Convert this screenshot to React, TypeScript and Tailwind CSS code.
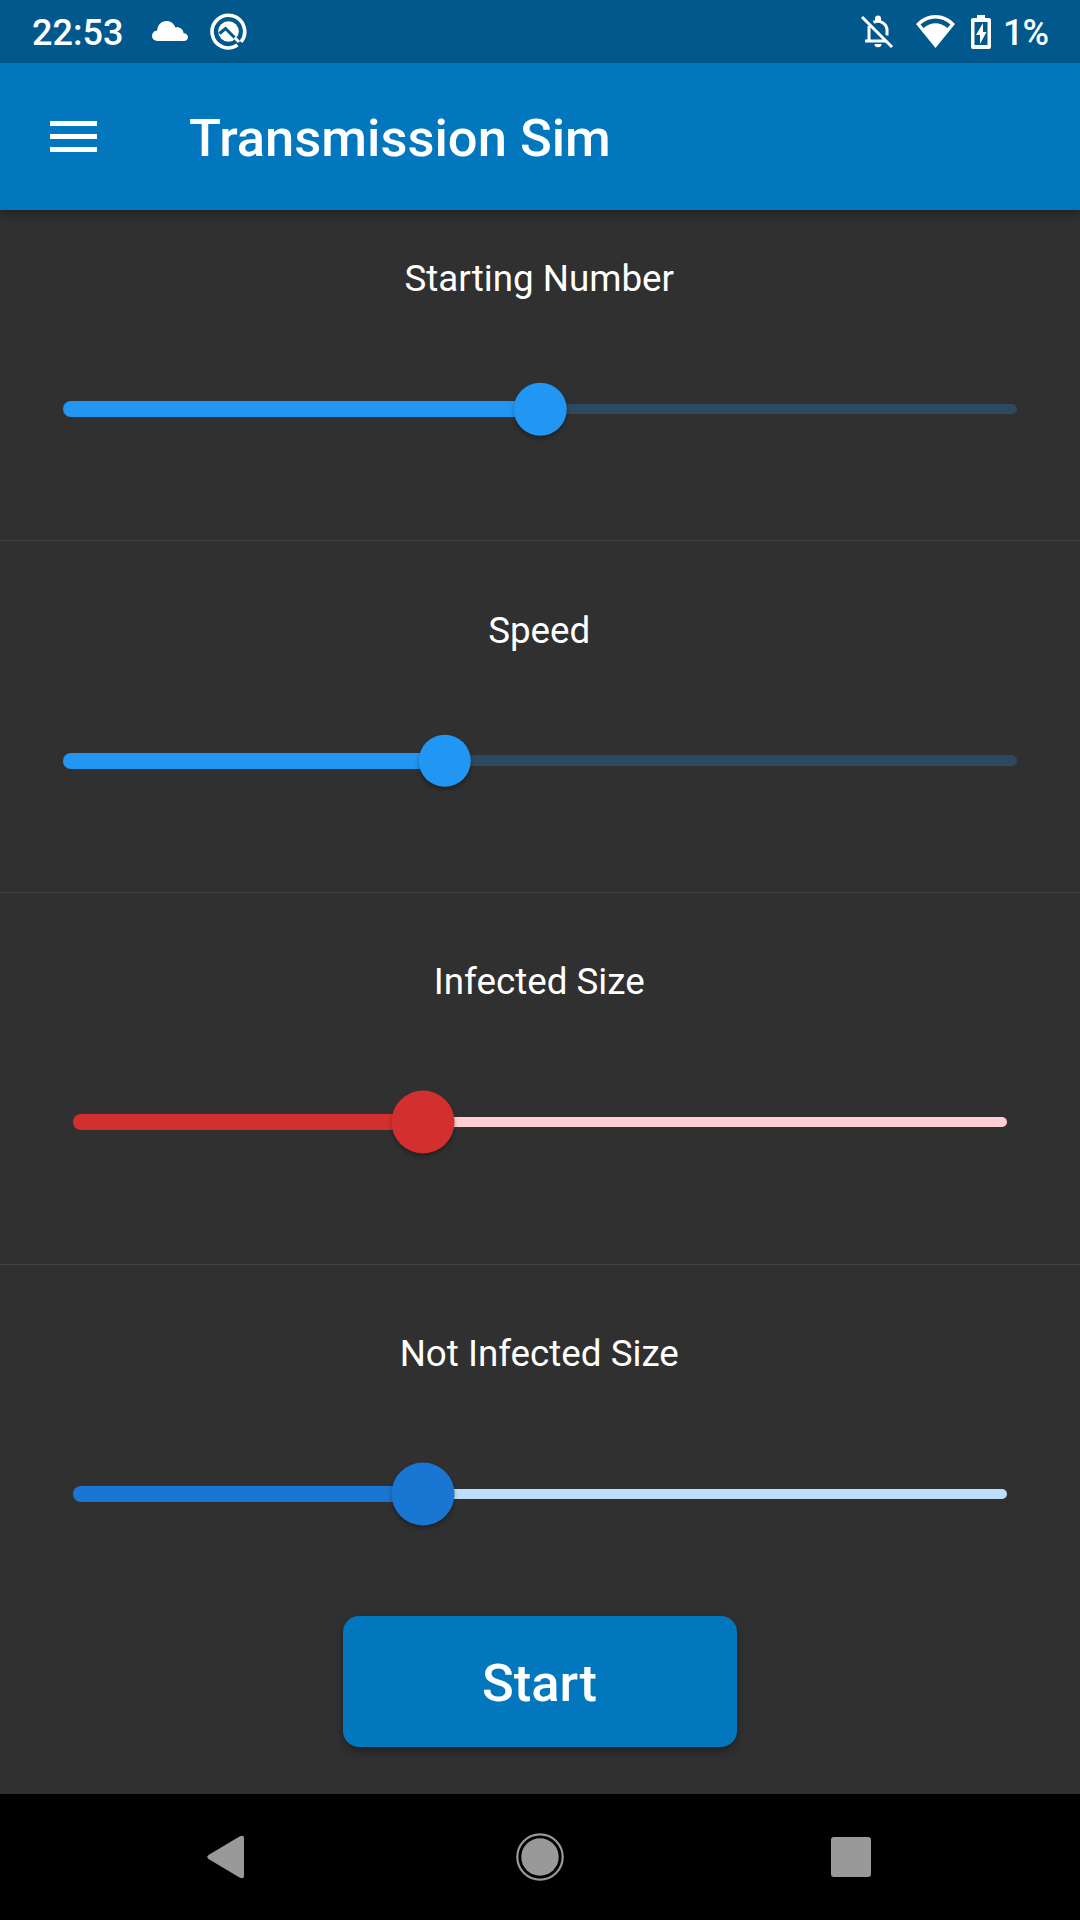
import React from "react";

type SliderProps = {
  label: string;
  section: string;
  labelPad: string;
  trackPad: string;
  trackBox: string;
  thumb: string;
  active: string;
  inactive: string;
  percent: number;
};

function SliderSection({ label, section, labelPad, trackPad, trackBox, thumb, active, inactive, percent }: SliderProps) {
  return (
    <section className={`flex flex-col ${section}`}>
      <h2 className={`pr-[1.500px] text-center text-[36.75px] leading-[43px] font-normal ${labelPad}`}>{label}</h2>
      <div className={trackPad}>
        <div className={`relative flex items-center ${trackBox}`}>
          <div className={`h-4 rounded-l-full ${active}`} style={{ width: `${percent}%` }} />
          <div className={`h-[10.5px] flex-1 rounded-r-full ${inactive}`} />
          <div
            className={`absolute top-1/2 -translate-x-1/2 -translate-y-1/2 rounded-full shadow-[0_3px_4px_rgba(0,0,0,0.3)] ${thumb} ${active}`}
            style={{ left: `${percent}%` }}
          />
        </div>
      </div>
    </section>
  );
}

function StatusBar() {
  return (
    <div className="flex h-[63px] items-center bg-[#01588d] pl-8 pr-[32px]">
      <span className="w-[120px] pt-[2px] text-[36px] leading-[42px] font-medium">22:53</span>
      <svg className="-mt-[2px] h-[20px] w-[36px]" viewBox="0 0 36 20" fill="currentColor">
        <path d="M5.500 20C2.300 20 0 17.800 0 14.800C0 12 2.200 9.700 5.200 9.400C5.200 4 9.500 0 14.500 0C18.700 0 22 2.500 23.400 6.500C27.800 5.600 31.200 8.600 31.600 12.200C34.200 12.300 36 14 36 16.200C36 18.400 34.300 20 32 20Z" />
      </svg>
      <svg className="ml-[22px] h-[37px] w-[37px]" viewBox="0 0 37 37" fill="none">
        <path d="M27.500 32.100A16.300 16.300 0 1 1 31 28.900" stroke="white" strokeWidth="3.600" />
        <circle cx="18.500" cy="18.500" r="10.300" fill="white" />
        <path d="M9.500 20.500L15.500 15.500L28 28" stroke="#01588d" strokeWidth="3" />
        <path d="M24.500 24.500L29 29" stroke="white" strokeWidth="3" />
      </svg>
      <div className="flex-1" />
      <svg className="h-[34px] w-[34px]" viewBox="0 0 34 34" fill="none" stroke="white">
        <path d="M9 11V26M5 26H26M13.500 7.300C20 4 27 9 27 15V20.500" strokeWidth="3" />
        <path d="M18 .5A3 3 0 0 1 21 3.500V6H15V3.500A3 3 0 0 1 18 .5ZM14.500 29H21.500A3.500 3.200 0 0 1 14.500 29Z" fill="white" stroke="none" />
        <path d="M4 0L34 30" stroke="#01588d" strokeWidth="2" />
        <path d="M2 2L32 32" strokeWidth="3" />
      </svg>
      <svg className="ml-[22px] h-[33px] w-[39px]" viewBox="0 0 39 33">
        <path d="M0 9C11 -3 28 -3 39 9L19.500 33Z" fill="white" />
        <path d="M4.500 9.500C13 1.500 26 1.500 34.500 9.500L31.500 13C24 6.500 15 6.500 7.500 13Z" fill="#01588d" />
      </svg>
      <svg className="ml-4 h-[34px] w-[20px]" viewBox="0 0 20 34">
        <path d="M6 0H14V3H18Q20 3 20 5V32Q20 34 18 34H2Q0 34 0 32V5Q0 3 2 3H6Z" fill="white" />
        <path d="M3.500 7H16.500V30H3.500Z" fill="#01588d" />
        <path d="M12 8L5 20H9V29L15.500 17H12Z" fill="white" />
      </svg>
      <span className="ml-[12px] pt-[2px] text-[36px] leading-[42px] font-medium tracking-[-1px]">1%</span>
    </div>
  );
}

export default function App() {
  return (
    <div className="flex h-[1920px] w-[1080px] flex-col overflow-hidden bg-[#303030] font-['Roboto',sans-serif] text-white">
      <StatusBar />
      <header className="z-10 flex h-[147px] items-center bg-[#0277bd] pl-[49.500px] shadow-[0_4px_10px_rgba(0,0,0,0.3)]">
        <button className="flex w-[47.500px] flex-col gap-2" aria-label="Menu">
          <span className="h-[5px] w-full bg-white" />
          <span className="h-[5px] w-full bg-white" />
          <span className="h-[5px] w-full bg-white" />
        </button>
        <h1 className="ml-[92px] pt-[2px] text-[52.500px] leading-[62px] font-medium">Transmission Sim</h1>
      </header>

      <main className="flex h-[1584px] flex-col">
        <SliderSection label="Starting Number" section="h-[330px]" labelPad="pt-[47px]" trackPad="px-[63px] pt-[83px]" trackBox="h-[52px]" thumb="size-[52.500px]" active="bg-[#2196f3]" inactive="bg-[#2c4960]" percent={50} />
        <div className="h-px bg-[#444444]" />
        <SliderSection label="Speed" section="h-[351px]" labelPad="pt-[68px]" trackPad="px-[63px] pt-[82.500px]" trackBox="h-[52px]" thumb="size-[52.500px]" active="bg-[#2196f3]" inactive="bg-[#2c4960]" percent={40} />
        <div className="h-px bg-[#444444]" />
        <SliderSection label="Infected Size" section="h-[371px]" labelPad="pt-[67px]" trackPad="px-[73px] pt-[87.500px]" trackBox="h-[63px]" thumb="size-[63px]" active="bg-[#d32f2f]" inactive="bg-[#ffcdd2]" percent={37.5} />
        <div className="h-px bg-[#444444]" />
        <SliderSection label="Not Infected Size" section="h-[351px]" labelPad="pt-[67px]" trackPad="px-[73px] pt-[87.500px]" trackBox="h-[63px]" thumb="size-[63px]" active="bg-[#1976d2]" inactive="bg-[#bbdefb]" percent={37.5} />
        <button className="h-[131px] w-[394px] self-center rounded-2xl bg-[#0277bd] pt-[3px] pr-px text-[52.500px] font-medium shadow-[0_5px_8px_rgba(0,0,0,0.3)]">Start</button>
      </main>

      <nav className="flex h-[126px] items-center bg-black text-[#999999]">
        <svg className="ml-[206px] h-[44px] w-[39px]" viewBox="0 0 39 44" fill="currentColor">
          <path d="M33.500 1.500Q38 -.5 38 3V41Q38 44.500 33.500 42.500L2.500 24Q0 22 2.500 20Z" />
        </svg>
        <svg className="ml-[270px] size-[50px]" viewBox="0 0 50 50">
          <circle cx="25" cy="25" r="22.700" fill="none" stroke="currentColor" strokeWidth="2.200" />
          <circle cx="25" cy="25" r="18.700" fill="currentColor" />
        </svg>
        <div className="ml-[266px] size-10 rounded-[3px] bg-[#999999]" />
      </nav>
    </div>
  );
}
